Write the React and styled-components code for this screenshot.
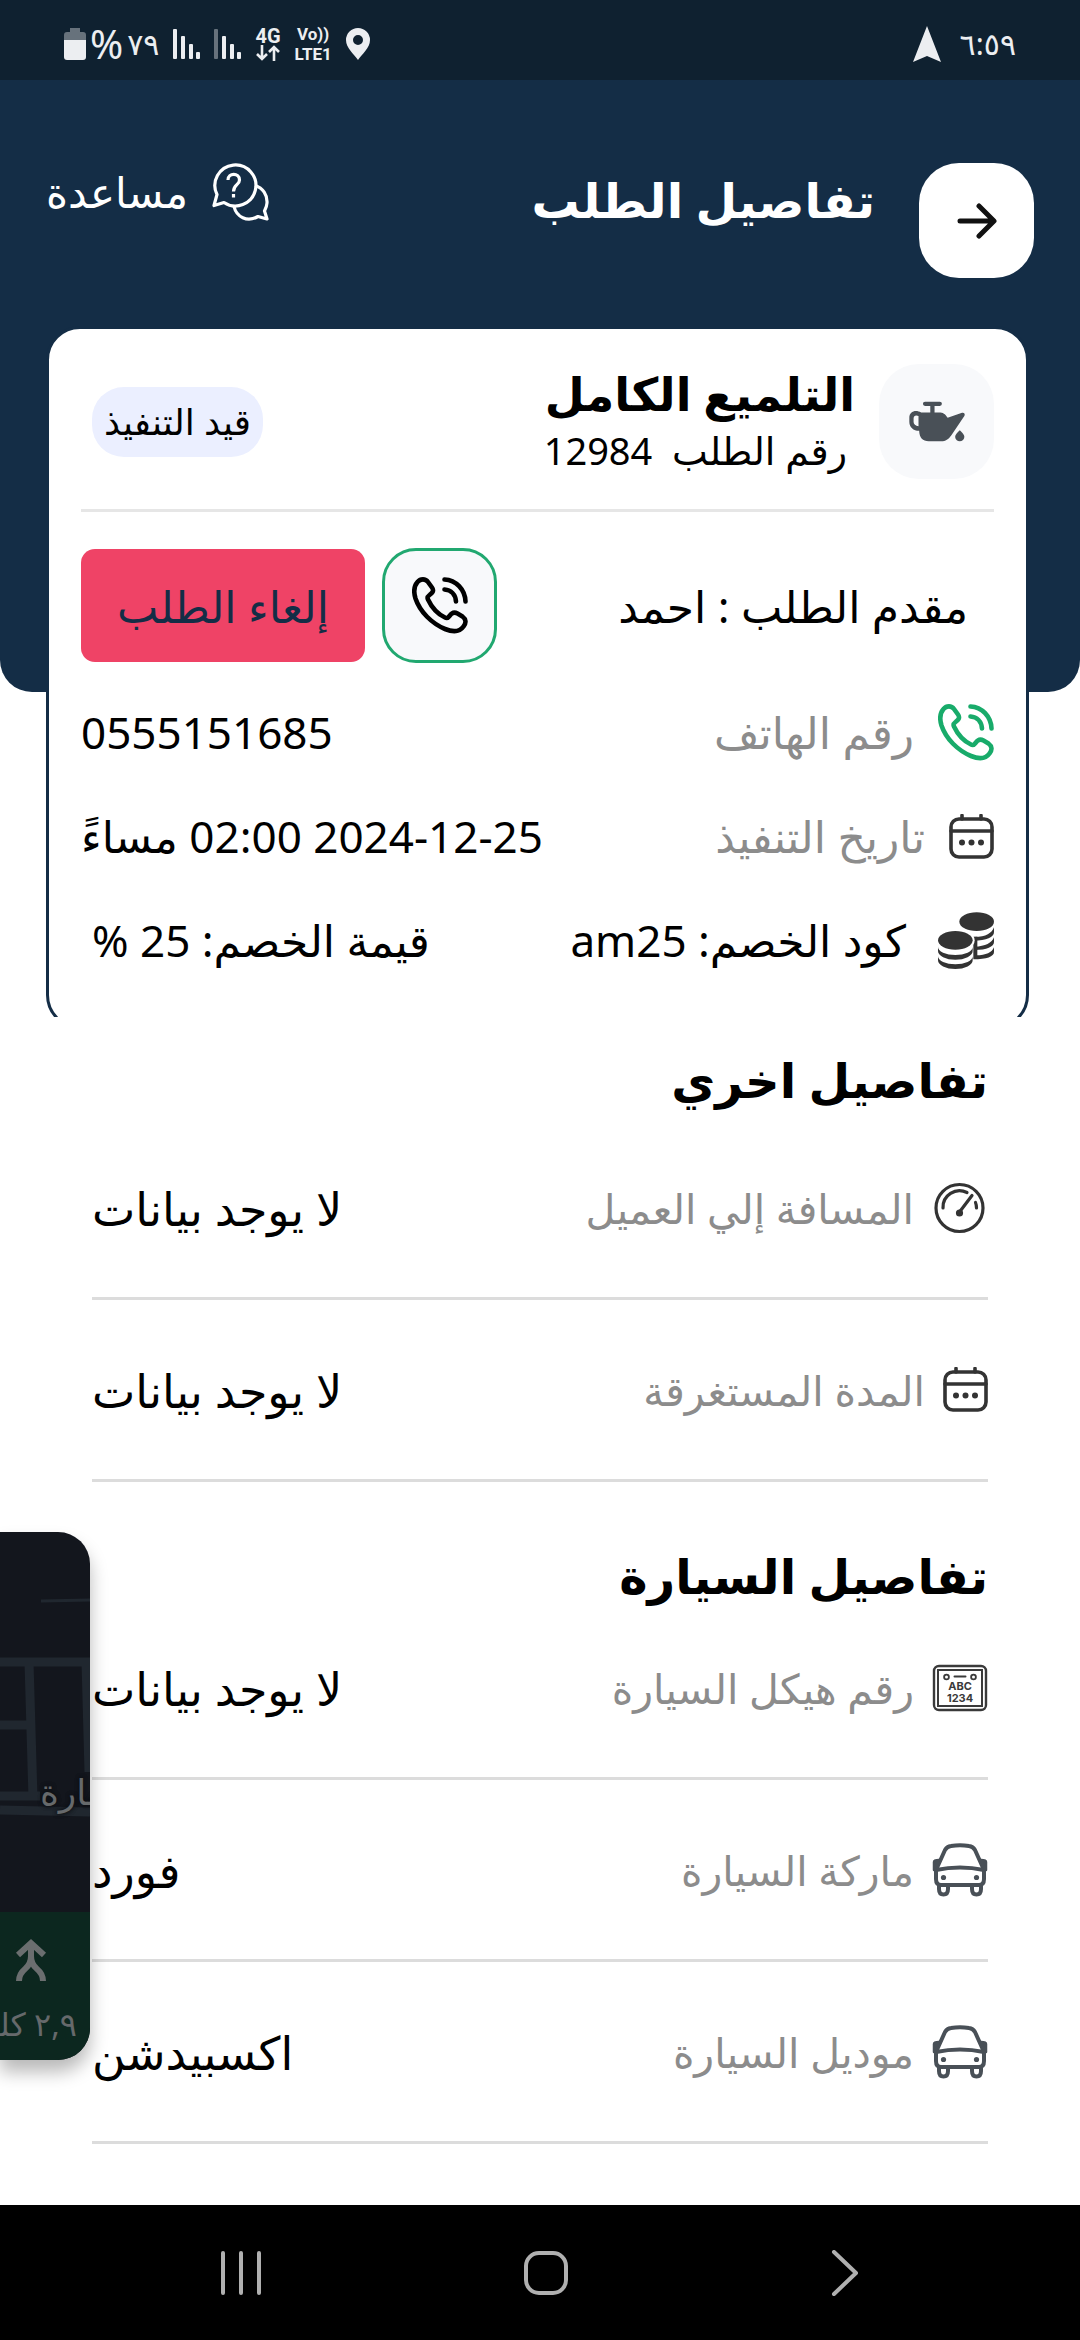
import styled, { createGlobalStyle } from "styled-components"

const GlobalStyle = createGlobalStyle`
    * {
        box-sizing: border-box;
        margin: 0;
        padding: 0;
    }
    body {
        background: #fff;
        color: #000;
        font-family: "Noto Sans", "DejaVu Sans", sans-serif;
    }
    button {
        font-family: inherit;
        cursor: pointer;
    }
    svg {
        display: block;
        flex-shrink: 0;
    }
`

const Screen = styled.div`
    display: flex;
    flex-direction: column;
    position: relative;
    width: 100%;
    min-height: 100vh;
    overflow: hidden;
`

const StatusBar = styled.div`
    display: flex;
    justify-content: space-between;
    align-items: center;
    direction: ltr;
    height: 80px;
    padding: 8px 64px 0 64px;
    background: #0f2130;
    color: #eceef1;
    font-size: 30px;
    line-height: 40px;
`

const StatusGroup = styled.div`
    display: flex;
    align-items: center;
    gap: ${props => props.$gap}px;
`

const Battery = styled.div`
    display: flex;
    align-items: center;
    gap: 4px;
`

const Percent = styled.span`
    font-size: 40px;
`

const Network = styled.div`
    display: flex;
    flex-direction: column;
    align-items: center;
    font-family: Roboto, sans-serif;
    font-size: ${props => props.$small ? 17 : 20}px;
    font-weight: 700;
    line-height: ${props => props.$small ? 20 : 18}px;
`

const Hero = styled.header`
    display: flex;
    justify-content: space-between;
    align-items: flex-start;
    padding: 83px 46px 414px;
    background: #142d46;
    border-radius: 0 0 32px 32px;
    color: #fff;
`

const HeroStart = styled.div`
    display: flex;
    align-items: flex-start;
    gap: 44px;
`

const BackButton = styled.button`
    display: flex;
    justify-content: center;
    align-items: center;
    width: 115px;
    height: 115px;
    border: 0;
    border-radius: 40px;
    background: #fff;
`

const PageTitle = styled.h1`
    font-size: 48px;
    font-weight: 700;
    line-height: 74px;
    white-space: nowrap;
`

const HelpLink = styled.a`
    display: flex;
    align-items: center;
    gap: 24px;
    color: #fff;
    font-size: 42px;
    line-height: 56px;
    text-decoration: none;
`

/* cuts the bottom edge of the card off */
const CardClip = styled.div`
    margin: -366px 51px 0 46px;
    overflow: hidden;
`

const Card = styled.section`
    margin-bottom: -12px;
    padding: 35px 32px 34px;
    border: 3px solid #142d46;
    border-radius: 34px;
    background: #fff;
`

const CardHead = styled.div`
    display: flex;
    justify-content: space-between;
    align-items: center;
    padding-bottom: 30px;
    padding-left: 11px;
    border-bottom: 3px solid #e6e6e6;
`

const Service = styled.div`
    display: flex;
    align-items: center;
    gap: 24px;
`

const IconBox = styled.div`
    display: flex;
    justify-content: center;
    align-items: center;
    width: 115px;
    height: 115px;
    border-radius: 40px;
    background: #f8f9fb;
`

const ServiceName = styled.h2`
    font-size: 46px;
    font-weight: 700;
    line-height: 57px;
    white-space: nowrap;
`

const OrderNumber = styled.p`
    padding-right: 8px;
    font-size: 38px;
    line-height: 57px;
    white-space: pre;
`

const Badge = styled.span`
    padding: 0 12px;
    border-radius: 32px;
    background: #ebefff;
    font-size: 36px;
    line-height: 70px;
    white-space: nowrap;
`

const Actions = styled.div`
    display: flex;
    align-items: center;
    gap: 17px;
    padding: 36px 26px 17px 0;
`

const Customer = styled.p`
    flex: 1;
    font-size: 44px;
    line-height: 56px;
    white-space: nowrap;
`

const CallButton = styled.button`
    display: flex;
    justify-content: center;
    align-items: center;
    width: 115px;
    height: 115px;
    border: 3px solid #21a870;
    border-radius: 34px;
    background: #f8f9fb;
`

const CancelButton = styled.button`
    width: 284px;
    height: 113px;
    border: 0;
    border-radius: 14px;
    background: #ef4366;
    color: #142d46;
    font-size: 44px;
    line-height: 56px;
    white-space: nowrap;
`

const CardRow = styled.div`
    display: flex;
    justify-content: space-between;
    align-items: center;
    height: 104px;
    padding-left: ${props => props.$inset ? 11 : 0}px;
`

const Label = styled.div`
    display: flex;
    align-items: center;
    gap: ${props => props.$gap || 24}px;
    color: ${props => props.$dark ? "#000" : "#8c8c8c"};
    font-size: ${props => props.$size || 44}px;
    line-height: 56px;
    white-space: nowrap;
`

const Value = styled.div`
    font-size: ${props => props.$size || 44}px;
    line-height: 56px;
    white-space: nowrap;
`

const Details = styled.main`
    flex: 1;
    padding: 0 92px 60px;
`

const SectionTitle = styled.h2`
    padding-top: ${props => props.$top}px;
    padding-bottom: ${props => props.$bottom || 0}px;
    font-size: 48px;
    font-weight: 700;
    line-height: 44px;
    white-space: nowrap;
`

const DetailRow = styled.div`
    display: flex;
    justify-content: space-between;
    align-items: center;
    height: 182px;
    border-bottom: 3px solid #dcdcdc;
`

const NavBar = styled.nav`
    display: flex;
    justify-content: space-between;
    align-items: center;
    direction: ltr;
    height: 135px;
    padding: 0 212px;
    background: #000;
`

const NavButton = styled.button`
    display: flex;
    border: 0;
    background: transparent;
`

/* picture-in-picture navigation window, pushed against the edge */
const MiniMap = styled.aside`
    position: absolute;
    top: 1532px;
    left: 0;
    width: 90px;
    height: 528px;
    overflow: hidden;
    border-radius: 0 32px 32px 0;
    background: #13161d;
    box-shadow: 0 12px 18px rgba(0, 0, 0, 0.28);
    color: #66696b;
`

const Place = styled.span`
    position: absolute;
    top: 236px;
    left: 40px;
    font-size: 36px;
    line-height: 48px;
    white-space: nowrap;
    text-shadow: 0 0 4px #0d0f13, 0 0 4px #0d0f13;
`

const Turn = styled.div`
    position: absolute;
    top: 380px;
    left: 0;
    width: 90px;
    height: 148px;
    padding-top: 26px;
    background: #0c271f;
`

const Distance = styled.p`
    padding-right: 13px;
    font-size: 32px;
    line-height: 80px;
    white-space: nowrap;
`

function SignalBars({ weak }) {
    return (
        <svg width="27" height="30" viewBox="0 0 27 30" fill="#eceef1">
            <rect width="4" height="30" rx="1" opacity={weak ? 0.4 : 1} />
            <rect x="8" y="7" width="4" height="23" rx="1" />
            <rect x="16" y="15" width="4" height="15" rx="1" />
            <rect x="23" y="23" width="4" height="7" rx="1" />
        </svg>
    )
}

function PhoneIcon({ color }) {
    return (
        <svg width="56" height="57" viewBox="0 0 56 57" fill="none" stroke={color} strokeWidth="4.6" strokeLinecap="round" strokeLinejoin="round">
            <path d="M5.5 5C8.5 1.5 13.5 1.5 16 5L20 10.5C22.5 14 20 16 17.5 18C15.5 19.5 15 20.5 16 22.5C20 31 25.5 37 33 40.5C35 41.5 36 41 37.5 39C39.5 36 42 34.5 45.5 36.5L50.5 39.5C54 42 54.5 46 51.5 49.5C48 54.5 41.5 55.5 33 52C20 46.5 8 35 3.5 21.5C1.5 15 2 9 5.5 5Z" />
            <path d="M32.5 2.5C44 3 53 12.5 53.5 24.5" />
            <path d="M32.5 12.5C39 13 43.5 17.5 44 24.5" />
        </svg>
    )
}

function CalendarIcon() {
    return (
        <svg width="45" height="45" viewBox="0 0 45 45" fill="none" stroke="#333" strokeWidth="3.6">
            <rect x="2" y="5" width="41" height="38" rx="8" />
            <path d="M2 17h41M13 5V1.5M32 5V1.5" strokeLinecap="round" />
            <g fill="#333" stroke="none">
                <circle cx="13" cy="28.5" r="3" />
                <circle cx="22.5" cy="28.5" r="3" />
                <circle cx="32" cy="28.5" r="3" />
            </g>
        </svg>
    )
}

function CoinsIcon() {
    return (
        <svg width="56" height="57" viewBox="54 666 168 171" fill="#333">
            <ellipse cx="170" cy="695" rx="52" ry="28" />
            <path d="M222 712v14C222 742 200 752 160 752L160 741C196 742 216 730 222 712Z" />
            <path d="M222 742v14C222 770 200 780 164 780L164 770C196 770 216 758 222 742Z" />
            <path d="M222 772v14C222 800 200 808 160 808L164 796C196 797 216 788 222 772Z" />
            <path d="M160 740h12v66h-12z" />
            <ellipse cx="106" cy="751" rx="58" ry="34" fill="#fff" />
            <ellipse cx="106" cy="751" rx="52" ry="28" />
            <path d="M54 771A52 24 0 0 0 158 771V783A52 26 0 0 1 54 783Z" />
            <path d="M54 799A52 24 0 0 0 158 799V811A52 26 0 0 1 54 811Z" />
        </svg>
    )
}

function OilIcon() {
    return (
        <svg width="56" height="41" viewBox="114 121 171 123" fill="#495057">
            <path d="M163 122h45a6 6 0 0 1 0 13H192v20h14c12 0 18 4 26 16l44-15c7-2 10 4 7 10L244 224c-10 14-18 19-32 19H174c-18 0-28-10-29-32-18 0-30-12-30-28v-12c0-20 20-26 36-16h28V135H163a6 6 0 0 1 0-13ZM143 166c-8-4-15-1-15 7v11c0 7 6 12 15 13Z" />
            <path d="M269 209c8 7 14 14 14 20a14 14 0 0 1-28 0c0-6 6-13 14-20Z" />
        </svg>
    )
}

function HelpIcon() {
    return (
        <svg width="57" height="58" viewBox="0 0 57 58" fill="none" stroke="#fff" strokeWidth="3.2" strokeLinejoin="round">
            <path d="M5 31.5A20.5 20.5 0 1 1 12 39.5L2 42.5Z" />
            <path d="M43 22.5C51 25 55.5 32 55 40C54.8 43.5 53.5 46 52.5 48L55 56L46 53.5C35 59.5 24.500 54 22 43.5" />
            <path d="M16 17C16 9.5 27.5 9.5 27.5 17C27.5 22 21.5 21.5 21.5 28.5" />
            <path d="M21.5 31v3.5" />
        </svg>
    )
}

function GaugeIcon() {
    return (
        <svg width="56" height="52" viewBox="0 0 56 52" fill="none" stroke="#333" strokeWidth="3.2" strokeLinecap="round">
            <circle cx="27.5" cy="26" r="23.5" />
            <path d="M11 26A16.5 16.5 0 0 1 35 10.5" />
            <path d="M43.5 20.5Q44.5 23 44.5 26" />
            <path d="M27.5 30L40 13.5" />
            <circle cx="27.5" cy="31" r="2" fill="#333" />
        </svg>
    )
}

function PlateIcon() {
    return (
        <svg width="56" height="48" viewBox="0 0 56 48" fill="none" stroke="#3a3a3a">
            <rect x="2" y="2" width="52" height="44" rx="5" strokeWidth="2.4" />
            <rect x="6" y="6" width="44" height="36" strokeWidth="2" />
            <circle cx="14.5" cy="13" r="2.4" strokeWidth="1.8" />
            <circle cx="41.5" cy="13" r="2.4" strokeWidth="1.8" />
            <path d="M22.5 12.5h11" strokeWidth="2" strokeLinecap="round" />
            <g fill="#3a3a3a" stroke="none" fontFamily="Inter, sans-serif" fontWeight="700" fontSize="11" textAnchor="middle" direction="ltr">
                <text x="28" y="26">ABC</text>
                <text x="28" y="38">1234</text>
            </g>
        </svg>
    )
}

function CarIcon() {
    return (
        <svg width="56" height="54" viewBox="0 0 56 54" fill="none" stroke="#495057" strokeWidth="4" strokeLinejoin="round">
            <path d="M4 27L13 7Q15 3.5 19 3Q28 1.5 37 3Q41 3.5 43 7L52 27" />
            <path d="M4 27Q28 22 52 27V36Q52 42 47 42H9Q4 42 4 36Z" />
            <path d="M2 19Q2 17 7 17L3 27H2ZM54 19Q54 17 49 17L53 27H54Z" fill="#495057" strokeWidth="2.5" />
            <path d="M7 42V46Q7 51.500 11.5 51.5Q16 51.5 16 46V42M40 42V46Q40 51.5 44.5 51.5Q49 51.5 49 46V42" />
            <circle cx="11.5" cy="34.5" r="2.6" fill="#495057" stroke="none" />
            <circle cx="44.5" cy="34.5" r="2.6" fill="#495057" stroke="none" />
        </svg>
    )
}

const otherDetails = [
    { icon: <GaugeIcon />, label: "المسافة إلي العميل", value: "لا يوجد بيانات" },
    { icon: <CalendarIcon />, label: "المدة المستغرقة", value: "لا يوجد بيانات" },
]

const carDetails = [
    { icon: <PlateIcon />, label: "رقم هيكل السيارة", value: "لا يوجد بيانات" },
    { icon: <CarIcon />, label: "ماركة السيارة", value: "فورد" },
    { icon: <CarIcon />, label: "موديل السيارة", value: "اكسبيدشن" },
]

function DetailList({ items }) {
    return items.map(item => (
        <DetailRow key={item.label}>
            <Label $gap={18} $size={41}>{item.icon}<span>{item.label}</span></Label>
            <Value $size={46}>{item.value}</Value>
        </DetailRow>
    ))
}

export default function App() {
    return (
        <Screen dir="rtl" lang="ar">
            <GlobalStyle />
            <StatusBar>
                <StatusGroup $gap={14}>
                    <Battery>
                        <svg width="22" height="34" viewBox="0 0 22 34" fill="#eceef1">
                            <path d="M6 1h10v4h3q3 0 3 3v5H0V8q0-3 3-3h3z" opacity="0.4" />
                            <path d="M0 13h22v17q0 3-3 3H3q-3 0-3-3z" />
                        </svg>
                        <Percent>%</Percent>
                        <span>٧٩</span>
                    </Battery>
                    <SignalBars />
                    <SignalBars weak />
                    <Network>
                        <span>4G</span>
                        <svg width="24" height="16" viewBox="0 0 24 16" fill="none" stroke="#eceef1" strokeWidth="2.6">
                            <path d="M6 0v14M1 9l5 5 5-5M18 16V2M13 7l5-5 5 5" />
                        </svg>
                    </Network>
                    <Network $small>
                        <span>Vo))</span>
                        <span>LTE1</span>
                    </Network>
                    <svg width="24" height="32" viewBox="0 0 24 32" fill="#eceef1">
                        <path fillRule="evenodd" d="M12 0a12 12 0 0 1 12 12c0 8-8 14-12 20C8 26 0 20 0 12A12 12 0 0 1 12 0Zm0 7a5 5 0 1 0 0 10a5 5 0 0 0 0-10Z" />
                    </svg>
                </StatusGroup>
                <StatusGroup $gap={19}>
                    <svg width="28" height="36" viewBox="0 0 28 36" fill="#eceef1">
                        <path d="M14 0L28 36L14 30L0 36Z" />
                    </svg>
                    <span>٦:٥٩</span>
                </StatusGroup>
            </StatusBar>

            <Hero>
                <HeroStart>
                    <BackButton aria-label="رجوع">
                        <svg width="40" height="36" viewBox="0 0 40 36" fill="none" stroke="#111" strokeWidth="5" strokeLinecap="round" strokeLinejoin="round">
                            <path d="M3 18h33M22 3l15 15-15 15" />
                        </svg>
                    </BackButton>
                    <PageTitle>تفاصيل الطلب</PageTitle>
                </HeroStart>
                <HelpLink href="#help">
                    <HelpIcon />
                    <span>مساعدة</span>
                </HelpLink>
            </Hero>

            <CardClip>
                <Card>
                    <CardHead>
                        <Service>
                            <IconBox><OilIcon /></IconBox>
                            <div>
                                <ServiceName>التلميع الكامل</ServiceName>
                                <OrderNumber>{"رقم الطلب  12984"}</OrderNumber>
                            </div>
                        </Service>
                        <Badge>قيد التنفيذ</Badge>
                    </CardHead>
                    <Actions>
                        <Customer>مقدم الطلب : احمد</Customer>
                        <CallButton aria-label="اتصال"><PhoneIcon color="#000" /></CallButton>
                        <CancelButton>إلغاء الطلب</CancelButton>
                    </Actions>
                    <CardRow>
                        <Label><PhoneIcon color="#18ab6a" /><span>رقم الهاتف</span></Label>
                        <Value>0555151685</Value>
                    </CardRow>
                    <CardRow>
                        <Label><CalendarIcon /><span>تاريخ التنفيذ</span></Label>
                        <Value>2024-12-25 02:00 مساءً</Value>
                    </CardRow>
                    <CardRow $inset>
                        <Label $gap={32} $dark><CoinsIcon /><span>كود الخصم: am25</span></Label>
                        <Value>قيمة الخصم: 25 %</Value>
                    </CardRow>
                </Card>
            </CardClip>

            <Details>
                <SectionTitle $top={41} $bottom={16}>تفاصيل اخري</SectionTitle>
                <DetailList items={otherDetails} />
                <SectionTitle $top={72}>تفاصيل السيارة</SectionTitle>
                <DetailList items={carDetails} />
            </Details>

            <NavBar>
                <NavButton aria-label="التطبيقات الأخيرة">
                    <svg width="58" height="46" viewBox="0 0 58 46" stroke="#b0b0b0" strokeWidth="4" strokeLinecap="round">
                        <path d="M11 3v40M29 3v40M47 3v40" />
                    </svg>
                </NavButton>
                <NavButton aria-label="الرئيسية">
                    <svg width="46" height="46" viewBox="0 0 46 46" fill="none" stroke="#b0b0b0" strokeWidth="4">
                        <rect x="3" y="3" width="40" height="40" rx="13" />
                    </svg>
                </NavButton>
                <NavButton aria-label="رجوع">
                    <svg width="46" height="46" viewBox="0 0 46 46" fill="none" stroke="#b0b0b0" strokeWidth="4" strokeLinecap="round" strokeLinejoin="round">
                        <path d="M12 2l22 21-22 21" />
                    </svg>
                </NavButton>
            </NavBar>

            <MiniMap>
                <svg width="90" height="380" viewBox="0 0 90 380" fill="none" stroke="#20272f" strokeWidth="9">
                    <path d="M41 69L90 68" strokeWidth="3" />
                    <path d="M0 130H90M0 193H30M29 130L33 266M86 130L89 240M0 264H40" />
                    <path d="M0 278L90 280" />
                </svg>
                <Place>عمارة</Place>
                <Turn>
                    <svg width="90" height="46" viewBox="0 0 90 46" fill="none" stroke="#6b6e6f" strokeWidth="6">
                        <path d="M18 17L31 5L44 17M31 6V24M19 43Q19 36 25 31T31 18Q31 26 37 31T43 43" />
                    </svg>
                    <Distance>٢,٩ كلم</Distance>
                </Turn>
            </MiniMap>
        </Screen>
    )
}
